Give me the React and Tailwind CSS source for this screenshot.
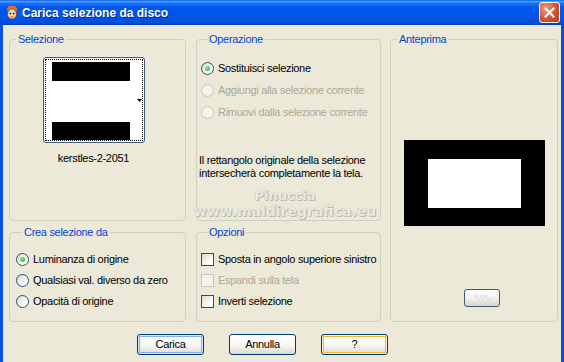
import React from "react";

function Group({ title, className, children }) {
  return (
    <fieldset className={`rounded-[4px] border border-[#d0d0bf] ${className}`}>
      <legend className="ml-[6px] px-[2px] leading-[13px] text-[#0046d5]">{title}</legend>
      {children}
    </fieldset>
  );
}

function Radio({ checked, disabled, label }) {
  return (
    <div className="flex h-[16px] items-center gap-[4px]">
      <span
        className={`flex h-[13px] w-[13px] items-center justify-center rounded-full border ${
          disabled
            ? "border-[#cac8bb] bg-[#f4f3ec]"
            : "border-[#1c5180] bg-[linear-gradient(135deg,#dcd9c8,#ffffff_75%)]"
        }`}
      >
        {checked && (
          <span className="h-[5px] w-[5px] rounded-full bg-[radial-gradient(circle_at_35%_35%,#8ef08e,#21a121)]" />
        )}
      </span>
      <span className={disabled ? "text-[#aca899]" : "text-black"}>{label}</span>
    </div>
  );
}

function Check({ disabled, label }) {
  return (
    <div className="flex h-[16px] items-center gap-[4px]">
      <span
        className={`h-[13px] w-[13px] border ${
          disabled
            ? "border-[#cac8bb] bg-[#f4f3ec]"
            : "border-[#1c5180] bg-[linear-gradient(135deg,#dcd9c8,#ffffff_75%)]"
        }`}
      />
      <span className={disabled ? "text-[#aca899]" : "text-black"}>{label}</span>
    </div>
  );
}

function XpButton({ children, variant }) {
  const inner =
    variant === "default"
      ? "shadow-[inset_0_0_0_1px_#cee7ff,inset_0_0_0_2px_#89adf0]"
      : variant === "hover"
      ? "shadow-[inset_0_0_0_1px_#fff0cf,inset_0_0_0_2px_#f8b330]"
      : "";
  return (
    <button
      className={`flex h-[21px] w-[67px] items-center justify-center rounded-[3px] border border-[#003c74] bg-[linear-gradient(to_bottom,#ffffff,#f4f4f0_60%,#dcd8cc)] text-black ${inner}`}
    >
      {children}
    </button>
  );
}

function AppIcon() {
  return (
    <svg width="14" height="15" viewBox="0 0 14 15">
      <path d="M2 6 C1 2 5 0 8 1 C11 1 13 3 12 7 L11 5 L9 6 L7 4 L5 6 L3 5 Z" fill="#e0702a" />
      <ellipse cx="7" cy="9" rx="4.5" ry="5" fill="#f6d7b0" stroke="#7a4a20" strokeWidth="0.8" />
      <circle cx="5.3" cy="8.5" r="0.9" fill="#222" />
      <circle cx="8.7" cy="8.5" r="0.9" fill="#222" />
      <path d="M5.5 11.5 Q7 12.7 8.5 11.5" stroke="#a33" strokeWidth="0.8" fill="none" />
    </svg>
  );
}

export default function App() {
  return (
    <div className="flex h-[362px] w-[564px] flex-col overflow-hidden bg-[#0a4fe0] font-['Liberation_Sans',Arial,sans-serif] text-[11px] tracking-[-0.3px]">
      {/* Title bar */}
      <div className="flex h-[25px] items-center bg-[linear-gradient(to_bottom,#0b5fe8_0%,#4a9cff_6%,#1c6ff6_14%,#0058ee_30%,#0054e6_70%,#004ed8_90%,#0042c0_100%)] pl-[5px] pr-[4px]">
        <AppIcon />
        <span className="ml-[3px] text-[12px] font-bold tracking-normal text-white [text-shadow:1px_1px_0_#0a2a7a]">
          Carica selezione da disco
        </span>
        <div className="ml-auto flex h-[21px] w-[21px] items-center justify-center rounded-[3px] border border-white bg-[radial-gradient(circle_at_30%_30%,#f09a7c,#d9502c_55%,#b8381a)]">
          <svg width="11" height="11" viewBox="0 0 11 11">
            <path d="M1.5 1.5 L9.5 9.5 M9.5 1.5 L1.5 9.5" stroke="white" strokeWidth="2" strokeLinecap="square" />
          </svg>
        </div>
      </div>

      {/* Window body */}
      <div className="flex flex-1 px-[3px]">
        <div className="relative flex flex-1 flex-col bg-[#ece9d8] pl-[6px] pt-[8px]">
          <div className="flex">
            {/* Left column */}
            <div className="flex w-[177px] flex-col gap-[5px]">
              <Group title="Selezione" className="h-[188px]">
                <div className="ml-[33px] mt-[11px] flex h-[86px] w-[102px] rounded-[3px] border border-[#3c5a7c] bg-white p-[1px]">
                  <div className="relative flex flex-1 flex-col border border-dotted border-black pl-[6px] pt-[2px]">
                    <div className="h-[19px] w-[78px] bg-black" />
                    <div className="h-[41px]" />
                    <div className="h-[18px] w-[78px] bg-black" />
                    <svg className="absolute right-0 top-[39px]" width="5" height="3" viewBox="0 0 5 3">
                      <path d="M0 0 L5 0 L2.5 3 Z" fill="black" />
                    </svg>
                  </div>
                </div>
                <div className="mt-[9px] pr-[8px] text-center leading-[13px]">kerstles-2-2051</div>
              </Group>
              <Group title="Crea selezione da" className="h-[96px] pl-[6px]">
                <div className="mt-[12px] flex flex-col gap-[5px]">
                  <Radio checked label="Luminanza di origine" />
                  <Radio label="Qualsiasi val. diverso da zero" />
                  <Radio label="Opacità di origine" />
                </div>
              </Group>
            </div>

            {/* Middle column */}
            <div className="ml-[10px] flex w-[185px] flex-col gap-[5px]">
              <Group title="Operazione" className="h-[188px] pl-[4px]">
                <div className="mt-[14px] flex flex-col gap-[6px]">
                  <Radio checked label="Sostituisci selezione" />
                  <Radio disabled label="Aggiungi alla selezione corrente" />
                  <Radio disabled label="Rimuovi dalla selezione corrente" />
                </div>
                <p className="-ml-[2px] mt-[34px] leading-[13px]">
                  Il rettangolo originale della selezione
                  <br />
                  intersecherà completamente la tela.
                </p>
              </Group>
              <Group title="Opzioni" className="h-[96px] pl-[4px]">
                <div className="mt-[12px] flex flex-col gap-[5px]">
                  <Check label="Sposta in angolo superiore sinistro" />
                  <Check disabled label="Espandi sulla tela" />
                  <Check label="Inverti selezione" />
                </div>
              </Group>
            </div>

            {/* Right column */}
            <Group title="Anteprima" className="ml-[9px] flex h-[289px] w-[168px] flex-col items-center">
              <div className="mt-[94px] flex h-[86px] w-[141px] items-center justify-center bg-black">
                <div className="h-[49px] w-[93px] bg-white" />
              </div>
              <div className="ml-[16px] mt-[63px] grid h-[18px] w-[36px] grid-cols-6 place-content-center rounded-[3px] border border-[#3c5a7c] bg-[linear-gradient(to_bottom,#ffffff,#eeeee8_60%,#d8d4c8)] px-[10px]">
                <span className="h-[3px] w-[3px] bg-[#e4e4e4]" />
                <span className="h-[3px] w-[3px]" />
                <span className="h-[3px] w-[3px] bg-[#e4e4e4]" />
                <span className="h-[3px] w-[3px]" />
                <span className="h-[3px] w-[3px] bg-[#e4e4e4]" />
                <span className="h-[3px] w-[3px]" />
                <span className="h-[3px] w-[3px]" />
                <span className="h-[3px] w-[3px] bg-[#e4e4e4]" />
                <span className="h-[3px] w-[3px]" />
                <span className="h-[3px] w-[3px] bg-[#e4e4e4]" />
                <span className="h-[3px] w-[3px]" />
                <span className="h-[3px] w-[3px] bg-[#e4e4e4]" />
              </div>
            </Group>
          </div>

          {/* Buttons */}
          <div className="mt-[12px] flex gap-[25px] pl-[128px]">
            <XpButton variant="default">Carica</XpButton>
            <XpButton>Annulla</XpButton>
            <XpButton variant="hover">?</XpButton>
          </div>

          {/* Watermark */}
          <div className="pointer-events-none absolute left-[186px] top-[164px] flex w-[192px] flex-col items-center font-['DejaVu_Sans',sans-serif] font-bold tracking-normal text-[#eceadf] [text-shadow:0_0_1px_#a8a69b,1px_1px_0_#bdbbb0]">
            <span className="text-[13px] leading-[14px]">Pinuccia</span>
            <span className="text-[14px] leading-[16px]">www.maldiregrafica.eu</span>
          </div>
        </div>
      </div>
    </div>
  );
}
